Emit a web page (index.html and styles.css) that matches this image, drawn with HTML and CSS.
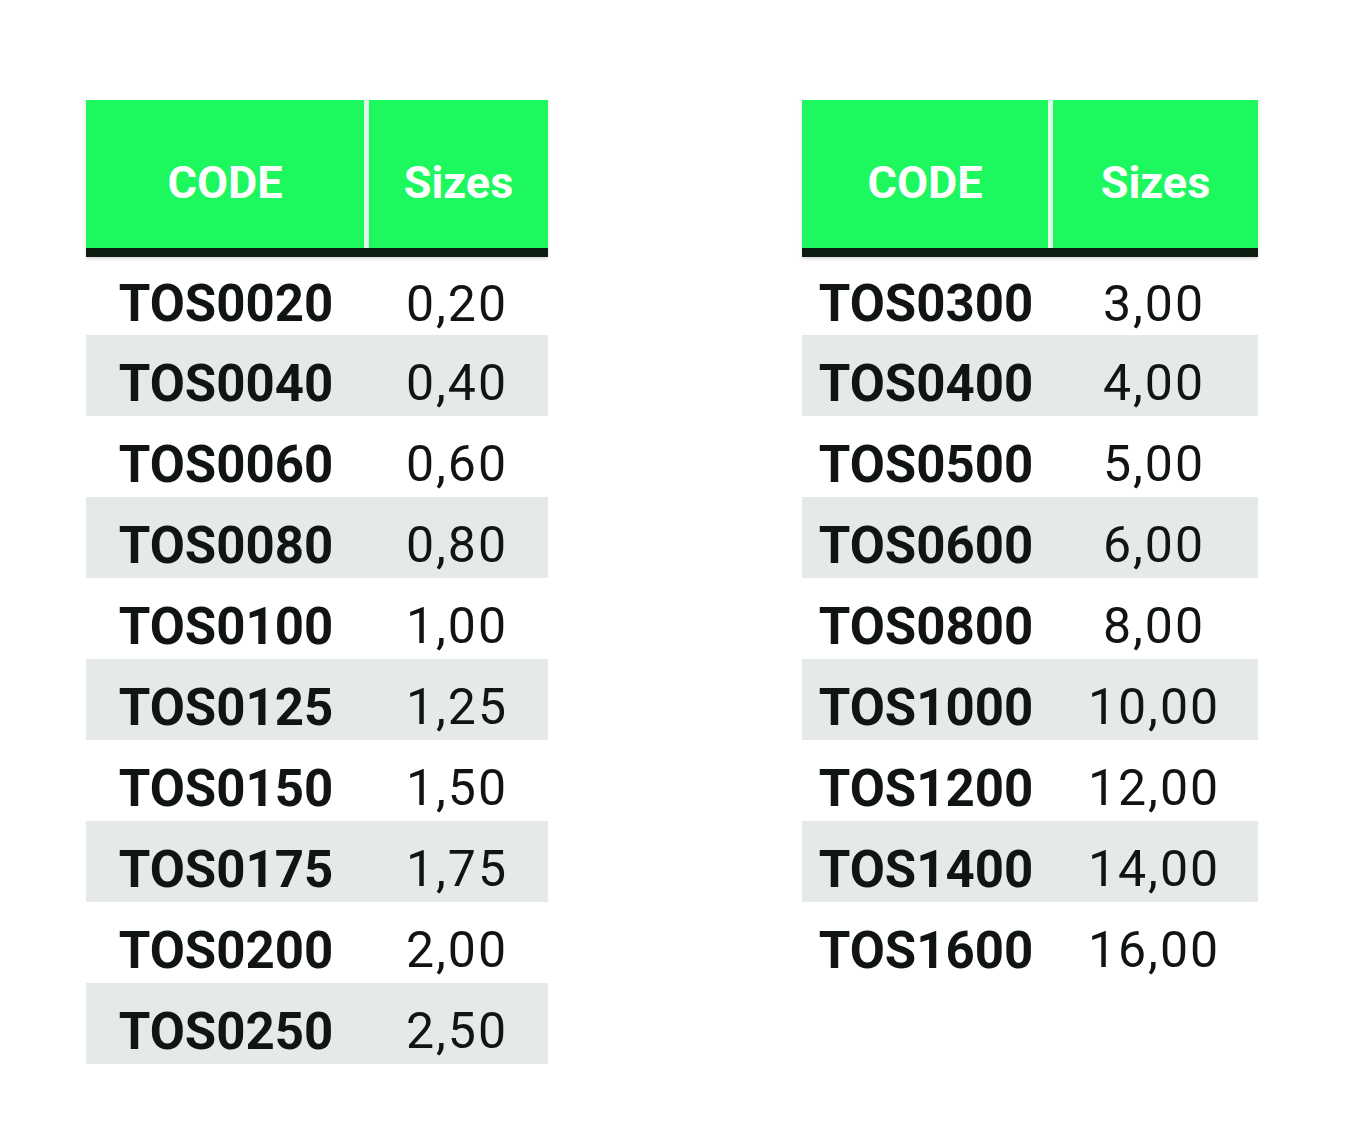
FILE: index.html
```html
<!DOCTYPE html>
<html>
<head>
<meta charset="utf-8">
<link rel="stylesheet" href="styles.css">
</head>
<body>
<div class="page">
  <div class="sizetable left">
    <div class="head">
      <div class="hcell hcode">CODE</div>
      <div class="hcell hsize">Sizes</div>
    </div>
    <div class="row"><span class="code">TOS0020</span><span class="size">0,20</span></div>
    <div class="row alt"><span class="code">TOS0040</span><span class="size">0,40</span></div>
    <div class="row"><span class="code">TOS0060</span><span class="size">0,60</span></div>
    <div class="row alt"><span class="code">TOS0080</span><span class="size">0,80</span></div>
    <div class="row"><span class="code">TOS0100</span><span class="size">1,00</span></div>
    <div class="row alt"><span class="code">TOS0125</span><span class="size">1,25</span></div>
    <div class="row"><span class="code">TOS0150</span><span class="size">1,50</span></div>
    <div class="row alt"><span class="code">TOS0175</span><span class="size">1,75</span></div>
    <div class="row"><span class="code">TOS0200</span><span class="size">2,00</span></div>
    <div class="row alt"><span class="code">TOS0250</span><span class="size">2,50</span></div>
  </div>
  <div class="sizetable right">
    <div class="head">
      <div class="hcell hcode">CODE</div>
      <div class="hcell hsize">Sizes</div>
    </div>
    <div class="row"><span class="code">TOS0300</span><span class="size">3,00</span></div>
    <div class="row alt"><span class="code">TOS0400</span><span class="size">4,00</span></div>
    <div class="row"><span class="code">TOS0500</span><span class="size">5,00</span></div>
    <div class="row alt"><span class="code">TOS0600</span><span class="size">6,00</span></div>
    <div class="row"><span class="code">TOS0800</span><span class="size">8,00</span></div>
    <div class="row alt"><span class="code">TOS1000</span><span class="size">10,00</span></div>
    <div class="row"><span class="code">TOS1200</span><span class="size">12,00</span></div>
    <div class="row alt"><span class="code">TOS1400</span><span class="size">14,00</span></div>
    <div class="row"><span class="code">TOS1600</span><span class="size">16,00</span></div>
  </div>
</div>
</body>
</html>
```
FILE: styles.css
```css
html, body {
  margin: 0;
  padding: 0;
  background: #ffffff;
}
body {
  font-family: Roboto, "Liberation Sans", sans-serif;
  color: #111414;
}
.page {
  display: flex;
  align-items: flex-start;
  gap: 254px;
  padding: 100px 0 0 86px;
}
.sizetable.left {
  width: 462px;
  --codew: 278px;
}
.sizetable.right {
  width: 456px;
  --codew: 246px;
}
.head {
  display: flex;
  height: 148px;
  border-bottom: 9px solid #0a1d10;
  box-shadow: 0 2px 3px rgba(0,0,0,0.15);
}
.hcell {
  background: #1cf85e;
  color: #ffffff;
  font-weight: 700;
  font-size: 45px;
  text-align: center;
  box-sizing: border-box;
  padding-top: 17px;
  line-height: 131px;
}
.hcode {
  width: var(--codew);
}
.hsize {
  flex: 1;
  border-left: 5px solid #dcfce6;
}
.row {
  display: grid;
  grid-template-columns: calc(var(--codew) + 2px) 1fr;
  height: 81px;
  box-sizing: border-box;
  padding-top: 16px;
  line-height: 65px;
  font-size: 51px;
}
.row:nth-child(2) {
  height: 78px;
  line-height: 62px;
}
.row.alt {
  background: #e5e9e8;
}
.code {
  font-weight: 700;
  text-align: center;
}
.size {
  font-weight: 400;
  text-align: center;
  letter-spacing: 2px;
  font-size: 50px;
}
```
